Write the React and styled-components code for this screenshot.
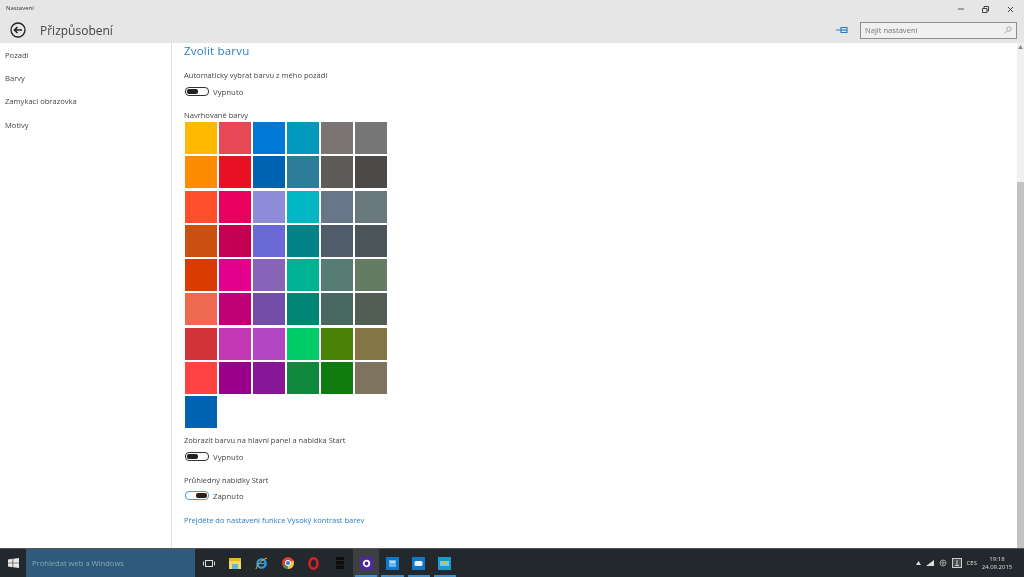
import styled, { createGlobalStyle } from "styled-components";

const GlobalStyle = createGlobalStyle`
	html, body {
		margin: 0;
		padding: 0;
		background: white;
		font-family: "Open Sans", "Noto Sans", sans-serif;
		overflow: hidden;
	}
`;

/* the reference is a soft, upscaled capture */
const Page = styled.div`
	width: 1024px;
	height: 577px;
	display: flex;
	flex-direction: column;
	overflow: hidden;
	filter: blur(0.4px);
`;

/* title bar + back row */
const Header = styled.header`
	height: 43px;
	flex: none;
	background: #e6e6e6;
	display: flex;
	flex-direction: column;
`;
const TitleRow = styled.div`
	height: 15px;
	display: flex;
	align-items: center;
	justify-content: space-between;
	padding-left: 6px;
`;
const AppName = styled.span`
	font-size: 6px;
	color: #333;
`;
const WindowButtons = styled.div`
	display: flex;
	align-items: center;
	padding: 3px 1px 0 0;
`;
const WindowButton = styled.div`
	width: 25px;
	height: 15px;
	display: flex;
	align-items: center;
	justify-content: center;
`;
const NavRow = styled.div`
	flex: 1;
	display: flex;
	align-items: center;
	padding: 2px 7px 0 10px;
`;
const PageTitle = styled.h1`
	margin: 0 0 0 14px;
	font-size: 12px;
	font-weight: 400;
	color: #444;
	flex: 1;
`;
const SearchBox = styled.div`
	margin-left: 12px;
	width: 157px;
	height: 17px;
	box-sizing: border-box;
	background: #f0f0f0;
	border: 1px solid #8e8e8e;
	display: flex;
	align-items: center;
	justify-content: space-between;
	padding: 0 4px;
	font-size: 7.6px;
	color: #777;
`;

/* main area */
const Body = styled.div`
	flex: 1;
	min-height: 0;
	display: flex;
	background: white;
`;
const Sidebar = styled.nav`
	width: 172px;
	flex: none;
	box-sizing: border-box;
	border-right: 1px solid #e2e2e2;
	display: flex;
	flex-direction: column;
	padding-left: 5px;
`;
const NavItem = styled.div`
	height: 23.4px;
	display: flex;
	align-items: center;
	font-size: 7.6px;
	color: #444;
`;
const Content = styled.main`
	flex: 1;
	padding-left: 12px;
	display: flex;
	flex-direction: column;
	align-items: flex-start;
`;
const SectionTitle = styled.h2`
	margin: 0;
	height: 17px;
	line-height: 15px;
	font-size: 11.5px;
	font-weight: 400;
	color: #2b7fc7;
	letter-spacing: 0.2px;
`;
const Label = styled.div`
	font-size: 7.55px;
	line-height: 10px;
	color: #444;
	margin-top: ${(p) => p.$top}px;
`;
const ToggleRow = styled.div`
	display: flex;
	align-items: center;
	gap: 4px;
	font-size: 7.8px;
	color: #444;
	margin-top: ${(p) => p.$top || 7}px;
	height: 9px;
`;
const Track = styled.div`
	width: 24px;
	height: 9px;
	margin-left: 1px;
	box-sizing: border-box;
	border-radius: 4px;
	border: 1px solid ${(p) => (p.$on ? "#4a9ad8" : "#333")};
	display: flex;
	justify-content: ${(p) => (p.$on ? "flex-end" : "flex-start")};
	padding: 0 1px;
	align-items: center;
`;
const Knob = styled.div`
	width: 11px;
	height: 5px;
	border-radius: 2px;
	background: #222;
`;
const Swatches = styled.div`
	display: grid;
	grid-template-columns: repeat(6, 32px);
	grid-auto-rows: 32px;
	gap: 2.25px 2px;
	margin: 2px 0 0 1px;
`;
const Swatch = styled.div`
	background: ${(p) => p.$color};
`;
const HelpLink = styled.a`
	font-size: 7.5px;
	line-height: 10px;
	color: #2b7fc7;
	margin-top: 15px;
`;
const ScrollBar = styled.div`
	width: 7px;
	flex: none;
	background: #f0f0f0;
	display: flex;
	flex-direction: column;
	align-items: center;
	padding-top: 2px;
`;
const ScrollSpace = styled.div`
	height: 133px;
`;
const ScrollThumb = styled.div`
	flex: 1;
	width: 100%;
	background: #c2c2c2;
`;

/* taskbar */
const Taskbar = styled.footer`
	height: 29px;
	flex: none;
	background: #23282c;
	border-top: 1px solid #555;
	box-sizing: border-box;
	display: flex;
	align-items: center;
	color: #ddd;
`;
const StartButton = styled.div`
	width: 26px;
	display: flex;
	justify-content: center;
`;
const SearchField = styled.div`
	width: 169px;
	height: 100%;
	background: #2f5a7b;
	display: flex;
	align-items: center;
	padding-left: 6px;
	box-sizing: border-box;
	font-size: 7.6px;
	color: #8fa6b8;
`;
const Apps = styled.div`
	display: flex;
	height: 100%;
	margin-left: 1px;
`;
const AppSlot = styled.div`
	position: relative;
	width: 26.2px;
	height: 100%;
	display: flex;
	align-items: center;
	justify-content: center;
	background: ${(p) => (p.$active ? "#3c4043" : "transparent")};
	&::after {
		content: "";
		display: ${(p) => (p.$open ? "block" : "none")};
		position: absolute;
		left: 2px;
		right: 2px;
		bottom: 0;
		height: 2px;
		background: #3f8fd0;
	}
`;
const Tray = styled.div`
	margin-left: auto;
	display: flex;
	align-items: center;
	gap: 5px;
	padding-right: 14px;
	font-size: 6px;
`;
const Clock = styled.div`
	display: flex;
	flex-direction: column;
	align-items: center;
	line-height: 8px;
	width: 26px;
	margin-left: 2px;
`;

const colors = [
	"#ffb900", "#e74856", "#0078d7", "#0099bc", "#7a7574", "#767676",
	"#ff8c00", "#e81123", "#0063b1", "#2d7d9a", "#5d5a58", "#4c4a48",
	"#ff4f2b", "#ea005e", "#8e8cd8", "#00b7c3", "#68768a", "#69797e",
	"#ca5010", "#c30052", "#6b69d6", "#038387", "#515c6b", "#4a5459",
	"#da3b01", "#e3008c", "#8764b8", "#00b294", "#567c73", "#647c64",
	"#ef6950", "#bf0077", "#744da9", "#018574", "#486860", "#525e54",
	"#d13438", "#c239b3", "#b146c2", "#00cc6a", "#498205", "#847545",
	"#ff4343", "#9a0089", "#881798", "#10893e", "#107c10", "#7e735f",
	"#0063b1",
];

const navItems = ["Pozadí", "Barvy", "Zamykací obrazovka", "Motivy"];

const BackIcon = () => (
	<svg width="16" height="16" viewBox="0 0 16 16" fill="none" stroke="#222">
		<circle cx="8" cy="8" r="7" strokeWidth="1.3" />
		<path d="M12 8H4.5M7.5 5 4.5 8l3 3" strokeWidth="1.6" />
	</svg>
);

const PinIcon = () => (
	<svg width="12" height="8" viewBox="0 0 12 8" fill="none" stroke="#2b7fc7" strokeWidth="1.2">
		<path d="M0 4h5M5 1v6M5 1.5h6v5H5" />
		<path d="M5 4h6" />
	</svg>
);

const SearchIcon = () => (
	<svg width="8" height="8" viewBox="0 0 8 8" fill="none" stroke="#aaa">
		<circle cx="5" cy="3" r="2.2" />
		<path d="M3.4 4.6.8 7.2" />
	</svg>
);

const Windows = () => (
	<svg width="11" height="10" viewBox="0 0 11 10" fill="#e8e8e8">
		<path d="M0 1.4 4.6.8v3.9H0zM5.200.7 11 0v4.700H5.200zM0 5.300h4.600v3.900L0 8.600zM5.200 5.300H11V10l-5.800-.7z" />
	</svg>
);

const Tile = ({ bg, children }) => (
	<svg width="13" height="13" viewBox="0 0 13 13">
		<rect width="13" height="13" fill={bg} />
		{children}
	</svg>
);

const App = () => {
	return (
		<Page>
			<GlobalStyle />
			<Header>
				<TitleRow>
					<AppName>Nastavení</AppName>
					<WindowButtons>
						<WindowButton>
							<svg width="6" height="2"><path d="M0 1h6" stroke="#555" /></svg>
						</WindowButton>
						<WindowButton>
							<svg width="7" height="7" fill="none" stroke="#444"><path d="M2 2V.5h4.500V5H5M.5 2.500H5v4H.5z" /></svg>
						</WindowButton>
						<WindowButton>
							<svg width="7" height="7" stroke="#444"><path d="m1 1 5 5M6 1 1 6" /></svg>
						</WindowButton>
					</WindowButtons>
				</TitleRow>
				<NavRow>
					<BackIcon />
					<PageTitle>Přizpůsobení</PageTitle>
					<PinIcon />
					<SearchBox>
						Najít nastavení
						<SearchIcon />
					</SearchBox>
				</NavRow>
			</Header>
			<Body>
				<Sidebar>
					{navItems.map((item) => (
						<NavItem key={item}>{item}</NavItem>
					))}
				</Sidebar>
				<Content>
					<SectionTitle>Zvolit barvu</SectionTitle>
					<Label $top={10}>Automaticky vybrat barvu z mého pozadí</Label>
					<ToggleRow>
						<Track><Knob /></Track>
						Vypnuto
					</ToggleRow>
					<Label $top={14}>Navrhované barvy</Label>
					<Swatches>
						{colors.map((c, i) => (
							<Swatch key={i} $color={c} />
						))}
					</Swatches>
					<Label $top={7}>Zobrazit barvu na hlavní panel a nabídka Start</Label>
					<ToggleRow>
						<Track><Knob /></Track>
						Vypnuto
					</ToggleRow>
					<Label $top={14}>Průhledný nabídky Start</Label>
					<ToggleRow $top={6}>
						<Track $on><Knob /></Track>
						Zapnuto
					</ToggleRow>
					<HelpLink>Přejděte do nastavení funkce Vysoký kontrast barev</HelpLink>
				</Content>
				<ScrollBar>
					<svg width="5" height="4" fill="#888"><path d="M2.500 0 5 4H0z" /></svg>
					<ScrollSpace />
					<ScrollThumb />
				</ScrollBar>
			</Body>
			<Taskbar>
				<StartButton><Windows /></StartButton>
				<SearchField>Prohledat web a Windows</SearchField>
				<Apps>
					<AppSlot>
						<svg width="12" height="9" fill="none" stroke="#ddd"><rect x="2.500" y="1.500" width="7" height="6" /><path d="M.5 2.500v4M11.500 2.500v4" /></svg>
					</AppSlot>
					<AppSlot>
						<svg width="12" height="11"><path d="M0 0h12v11H0z" fill="#f5d76e" /><path d="M0 0h12v3H0z" fill="#e8b923" /><path d="M3 6h6v5H3z" fill="#5fb8e0" /></svg>
					</AppSlot>
					<AppSlot>
						<svg width="13" height="13" fill="none"><circle cx="6.500" cy="6.500" r="4.200" stroke="#2f9be0" strokeWidth="2.200" /><path d="M3 6.500h7" stroke="#2f9be0" strokeWidth="1.500" /><path d="M1 12c1-4 5-9 11-11" stroke="#e8b923" /></svg>
					</AppSlot>
					<AppSlot>
						<svg width="12" height="12"><circle cx="6" cy="6" r="6" fill="#d9433a" /><path d="M6 6 1 9.400A6 6 0 0 0 6 12z" fill="#3f9a45" /><path d="M6 6v6a6 6 0 0 0 5.400-8.600z" fill="#f2c43a" /><circle cx="6" cy="6" r="2.600" fill="#3f7fd8" stroke="#fff" /></svg>
					</AppSlot>
					<AppSlot>
						<svg width="11" height="13" fill="none"><ellipse cx="5.500" cy="6.500" rx="4" ry="5.200" stroke="#d9202a" strokeWidth="2.600" /></svg>
					</AppSlot>
					<AppSlot>
						<svg width="8" height="12" fill="#0c0c0c"><path d="M0 0h8v3H0zM0 4h8v3.500H0zM0 8.500h8V12H0z" /></svg>
					</AppSlot>
					<AppSlot $active $open>
						<Tile bg="#4a2a9c"><circle cx="6.500" cy="6.500" r="2.800" fill="none" stroke="#fff" strokeWidth="1.800" /></Tile>
					</AppSlot>
					<AppSlot $open>
						<Tile bg="#0f78c8"><path d="M3 3h7v7H3z" fill="#6fb6e8" /><path d="M4 5h5" stroke="#fff" /></Tile>
					</AppSlot>
					<AppSlot $open>
						<Tile bg="#0f78c8"><rect x="2.500" y="4" width="8" height="5" rx="1.500" fill="#e8f2fa" /></Tile>
					</AppSlot>
					<AppSlot $open>
						<Tile bg="#1a9ad0"><path d="M2 4h9v5H2z" fill="#6fd0e8" /><path d="M5 4h3v3H5z" fill="#e8b923" /></Tile>
					</AppSlot>
				</Apps>
				<Tray>
					<svg width="5" height="4" fill="#ddd"><path d="M2.500 0 5 4H0z" /></svg>
					<svg width="8" height="6" fill="#ddd"><path d="M8 0v6H0z" /></svg>
					<svg width="8" height="8" fill="none" stroke="#999"><circle cx="4" cy="4" r="3" /><path d="M1 4h6M4 1v6" /></svg>
					<svg width="10" height="10" fill="none" stroke="#ccc"><rect x=".5" y=".5" width="9" height="9" fill="#4a4f52" /><path d="M3 7.500h4M5 2v5" /></svg>
					<span>CES</span>
					<Clock>
						<span>19:18</span>
						<span>24.09.2015</span>
					</Clock>
				</Tray>
			</Taskbar>
		</Page>
	);
};

export default App;
